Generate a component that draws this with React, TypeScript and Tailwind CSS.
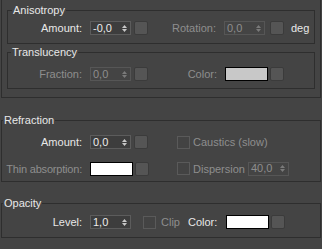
import type { ReactNode } from "react";

function Arrows({ on }: { on: boolean }) {
  return (
    <svg width="5" height="9" viewBox="0 0 5 9" className={on ? "fill-[#c8c8c8]" : "fill-[#7a7a7a]"}>
      <path d="M0 4 L2.5 1 L5 4 Z" />
      <path d="M0 5 L2.5 8 L5 5 Z" />
    </svg>
  );
}

function Spinner({ value, on = true }: { value: string; on?: boolean }) {
  return (
    <div
      className={
        on
          ? "flex h-[14px] w-[41px] items-center justify-between border border-[#5c5c5c] bg-[#3d3d3d] pl-[2px] pr-[3px] text-[#ececec]"
          : "flex h-[14px] w-[41px] items-center justify-between border border-[#565656] bg-[#444444] pl-[2px] pr-[3px] text-[#8e8e8e]"
      }
    >
      <span className="leading-none">{value}</span>
      <Arrows on={on} />
    </div>
  );
}

function MapBtn({ className = "" }: { className?: string }) {
  return <div className={`h-[14px] w-[14px] rounded-[2px] border border-[#3b3b3b] bg-[#555555] ${className}`} />;
}

function Swatch({ color }: { color: "white" | "gray" }) {
  return (
    <div
      className={
        color === "white"
          ? "h-[14px] w-[43px] border border-black bg-white"
          : "h-[14px] w-[43px] border border-black bg-[#c8c8c8]"
      }
    />
  );
}

function Check({ className = "" }: { className?: string }) {
  return <div className={`h-[13px] w-[13px] border border-[#5a5a5a] bg-[#434343] ${className}`} />;
}

function Group({ title, className, labelPos, children }: { title: string; className: string; labelPos: string; children: ReactNode }) {
  return (
    <div className={`relative border border-[#2e2e2e] ${className}`}>
      <span className={`absolute top-[-8px] bg-[#444444] px-[1px] leading-[14px] text-[#e8e8e8] ${labelPos}`}>{title}</span>
      {children}
    </div>
  );
}

export default function App() {
  return (
    <div className="h-[249px] w-[322px] overflow-hidden bg-[#444444] font-['Liberation_Sans',Arial,sans-serif] text-[11px] text-[#e8e8e8]">
      {/* top rollout */}
      <div className="ml-[1px] w-[320px] border-x border-b border-[#2e2e2e] pb-[8px] pt-[10px]">
        <Group title="Anisotropy" className="ml-[5px] h-[34px] w-[308px]" labelPos="left-[4px]">
          <div className="flex items-center pt-[9px]">
            <span className="w-[74px] text-right">Amount:</span>
            <div className="ml-[8px]">
              <Spinner value="-0,0" />
            </div>
            <MapBtn className="ml-[3px]" />
            <span className="w-[68px] text-right text-[#8e8e8e]">Rotation:</span>
            <div className="ml-[8px]">
              <Spinner value="0,0" on={false} />
            </div>
            <MapBtn className="ml-[5px]" />
            <span className="ml-[7px]">deg</span>
          </div>
        </Group>
        <Group title="Translucency" className="ml-[5px] mt-[8px] h-[37px] w-[308px]" labelPos="left-[3px]">
          <div className="flex items-center pt-[13px]">
            <span className="w-[74px] text-right text-[#8e8e8e]">Fraction:</span>
            <div className="ml-[8px]">
              <Spinner value="0,0" on={false} />
            </div>
            <MapBtn className="ml-[3px]" />
            <span className="w-[69px] text-right text-[#8e8e8e]">Color:</span>
            <div className="ml-[8px]">
              <Swatch color="gray" />
            </div>
            <MapBtn className="ml-[2px]" />
          </div>
        </Group>
      </div>

      {/* refraction */}
      <Group title="Refraction" className="ml-[1px] mt-[22px] h-[62px] w-[320px]" labelPos="left-[1px]">
        <div className="flex items-center pt-[13px]">
          <span className="w-[80px] text-right">Amount:</span>
          <div className="ml-[8px]">
            <Spinner value="0,0" />
          </div>
          <MapBtn className="ml-[3px]" />
          <Check className="ml-[29px]" />
          <span className="ml-[3px] text-[#8e8e8e]">Caustics (slow)</span>
        </div>
        <div className="mt-[10px] flex items-center">
          <span className="w-[80px] whitespace-nowrap text-right tracking-[-0.2px] text-[#8e8e8e]">Thin absorption:</span>
          <div className="ml-[8px]">
            <Swatch color="white" />
          </div>
          <MapBtn className="ml-[2px]" />
          <Check className="ml-[28px]" />
          <span className="ml-[3px] text-[#8e8e8e]">Dispersion</span>
          <div className="ml-[3px]">
            <Spinner value="40,0" on={false} />
          </div>
        </div>
      </Group>

      {/* opacity */}
      <Group title="Opacity" className="ml-[1px] mt-[21px] h-[35px] w-[320px]" labelPos="left-[1px]">
        <div className="flex items-center pt-[10px]">
          <span className="w-[80px] text-right">Level:</span>
          <div className="ml-[8px]">
            <Spinner value="1,0" />
          </div>
          <Check className="ml-[12px]" />
          <span className="ml-[5px] w-[27px] text-[#8e8e8e]">Clip</span>
          <span>Color:</span>
          <div className="ml-[9px]">
            <Swatch color="white" />
          </div>
          <MapBtn className="ml-[2px]" />
        </div>
      </Group>
    </div>
  );
}
